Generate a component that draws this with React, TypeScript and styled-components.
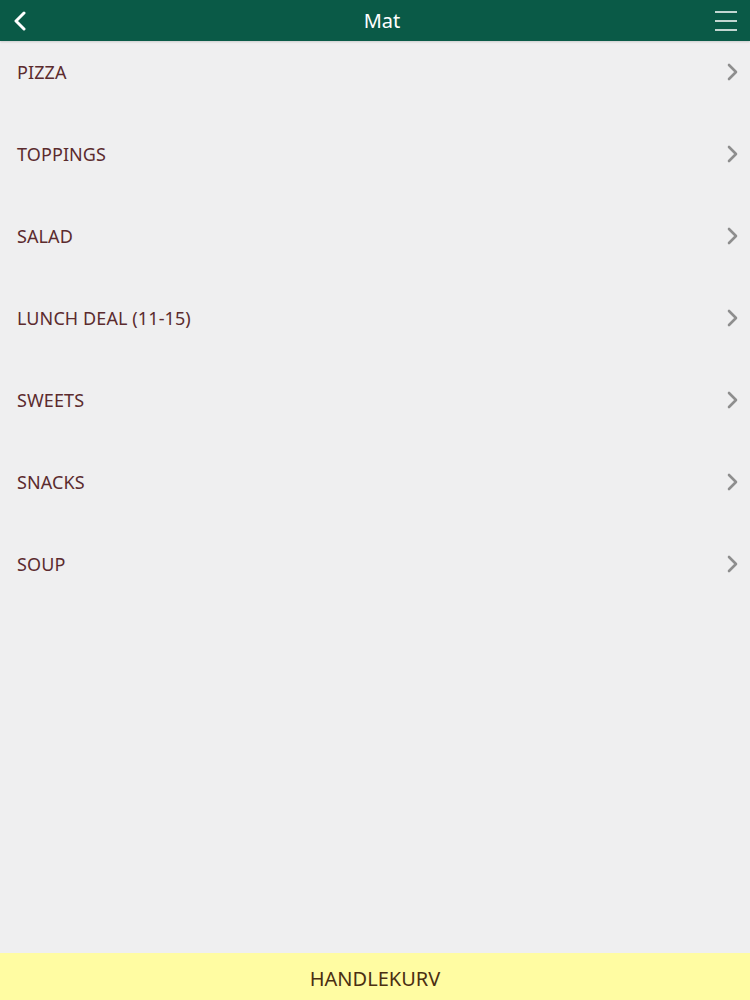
import styled, { createGlobalStyle } from "styled-components";

const GlobalStyle = createGlobalStyle`
  html, body {
    margin: 0;
    padding: 0;
    height: 100%;
  }
  body {
    background: #efeff0;
    font-family: "Noto Sans", "Open Sans", sans-serif;
  }
  #root {
    height: 100%;
  }
`;

const Page = styled.div`
  display: flex;
  flex-direction: column;
  height: 1000px;
  background: #efeff0;
`;

const Header = styled.header`
  height: 41px;
  background: #0a5a47;
  display: flex;
  align-items: center;
  justify-content: space-between;
  padding: 0 12px 0 8px;
  box-shadow: 0 1px 2px rgba(0, 0, 0, 0.15);
`;

const Title = styled.h1`
  margin: 0 0 0 18px;
  font-size: 20px;
  font-weight: 400;
  color: #ffffff;
`;

const IconButton = styled.button`
  background: none;
  border: none;
  padding: 0;
  width: 24px;
  height: 24px;
  display: flex;
  align-items: center;
  justify-content: center;
  cursor: pointer;
`;

const List = styled.ul`
  list-style: none;
  margin: 0;
  padding: 0;
  flex: 1;
`;

const Row = styled.li`
  height: 62px;
  margin-bottom: 20px;
  display: flex;
  align-items: center;
  justify-content: space-between;
  padding: 0 12px 0 17px;
  cursor: pointer;
`;

const Label = styled.span`
  font-size: 18px;
  color: #5b2b2e;
  letter-spacing: 0.1px;
`;

const Footer = styled.button`
  height: 47px;
  border: none;
  padding: 3px 0 0;
  background: #fffca2;
  color: #4a2f12;
  font-family: "Noto Sans", "Open Sans", sans-serif;
  font-size: 20px;
  display: flex;
  align-items: center;
  justify-content: center;
  cursor: pointer;
`;

const categories = [
  "PIZZA",
  "TOPPINGS",
  "SALAD",
  "LUNCH DEAL (11-15)",
  "SWEETS",
  "SNACKS",
  "SOUP",
];

function Chevron() {
  return (
    <svg width="12" height="18" viewBox="0 0 12 18">
      <path d="M3 2 L10 9 L3 16" fill="none" stroke="#8e8e8e" strokeWidth="2.6" strokeLinecap="round" strokeLinejoin="round" />
    </svg>
  );
}

export default function App() {
  return (
    <Page>
      <GlobalStyle />
      <Header>
        <IconButton aria-label="Tilbake">
          <svg width="14" height="20" viewBox="0 0 14 20">
            <path d="M11 2 L3 10 L11 18" fill="none" stroke="#ffffff" strokeWidth="3" strokeLinecap="round" strokeLinejoin="round" />
          </svg>
        </IconButton>
        <Title>Mat</Title>
        <IconButton aria-label="Meny">
          <svg width="24" height="22" viewBox="0 0 24 22">
            <path d="M1 2 H23 M1 11 H23 M1 20 H23" stroke="#ffffff" strokeWidth="1.6" />
          </svg>
        </IconButton>
      </Header>
      <List>
        {categories.map((c) => (
          <Row key={c}>
            <Label>{c}</Label>
            <Chevron />
          </Row>
        ))}
      </List>
      <Footer>HANDLEKURV</Footer>
    </Page>
  );
}
